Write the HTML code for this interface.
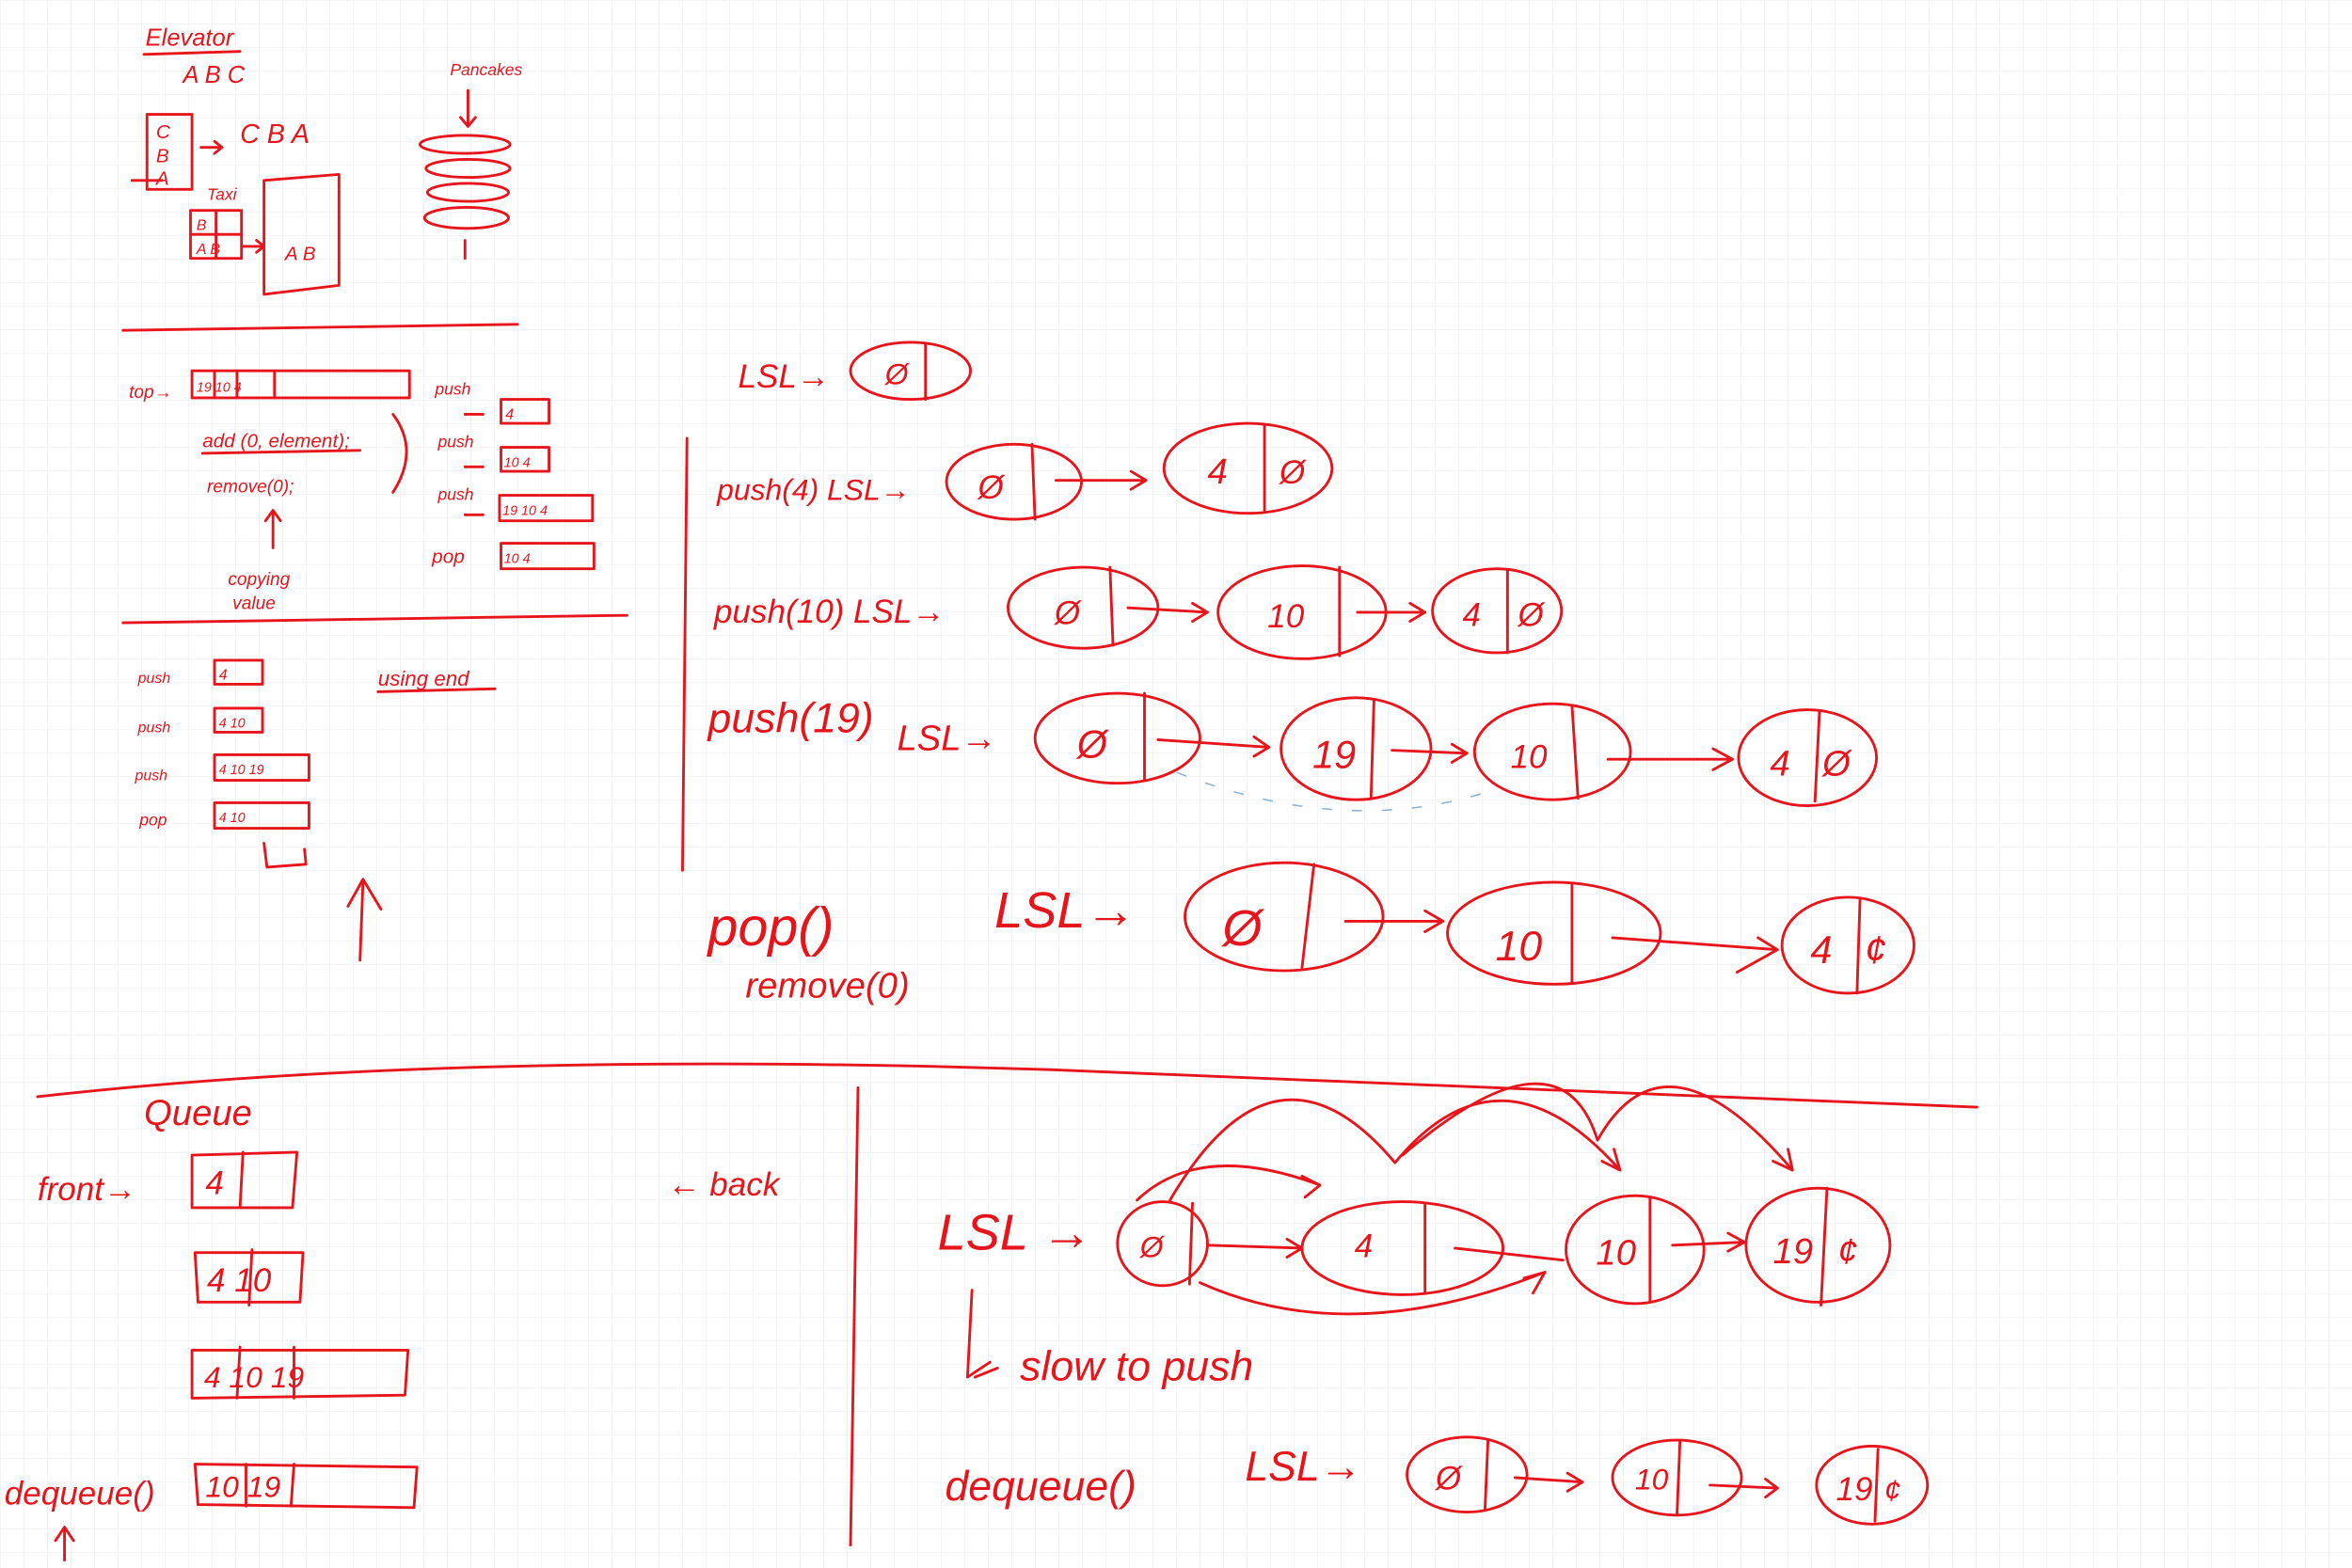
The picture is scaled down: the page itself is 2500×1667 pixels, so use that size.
<!DOCTYPE html>
<html><head><meta charset="utf-8"><style>
html,body{margin:0;padding:0;width:2500px;height:1667px;overflow:hidden;background:#fff;}
body{background-image:linear-gradient(#f4f4f4 1px,transparent 1px),linear-gradient(90deg,#f4f4f4 1px,transparent 1px);background-size:25px 25px;}
svg{position:absolute;left:0;top:0}
text{font-family:"Liberation Sans",sans-serif;fill:#e8141c;font-style:italic}
</style></head><body>
<svg width="2500" height="1667" viewBox="0 0 1568 1045" fill="none" stroke="#e8141c" stroke-width="1.8" stroke-linecap="round" stroke-linejoin="round">
<text x="97" y="30" font-size="16" stroke="none">Elevator</text>
<path d="M96 36 L160 34"/>
<text x="122" y="55" font-size="16" stroke="none">A   B   C</text>
<rect x="98" y="76" width="30" height="50"/>
<text x="104" y="92" font-size="13" stroke="none">C</text>
<text x="104" y="108" font-size="13" stroke="none">B</text>
<text x="104" y="123" font-size="13" stroke="none">A</text>
<path d="M88 120 L108 120 M134 98 L148 98 M143 94 L148 98 L143 102"/>
<text x="160" y="95" font-size="18" stroke="none">C  B  A</text>
<text x="138" y="133" font-size="11" stroke="none">Taxi</text>
<rect x="127" y="140" width="34" height="32"/>
<path d="M127 156 L161 156 M144 140 L144 172 M162 164 L176 164 M171 160 L176 164 L171 168"/>
<text x="131" y="153" font-size="10" stroke="none">B</text>
<text x="131" y="169" font-size="10" stroke="none">A B</text>
<path d="M176 120 L226 116 L226 190 L176 196 Z"/>
<text x="190" y="173" font-size="13" stroke="none">A B</text>
<text x="300" y="50" font-size="11" stroke="none">Pancakes</text>
<path d="M312 60 L312 84 M307 78 L312 84 L317 78"/>
<ellipse cx="310" cy="96" rx="30" ry="6"/><ellipse cx="312" cy="112" rx="28" ry="6"/>
<ellipse cx="312" cy="128" rx="27" ry="6"/><ellipse cx="311" cy="145" rx="28" ry="7"/>
<path d="M310 172 L310 160"/>
<path d="M82 220 L345 216"/>
<text x="86" y="265" font-size="12" stroke="none">top→</text>
<rect x="128" y="247" width="145" height="18"/>
<path d="M143 247 L143 265 M158 247 L158 265 M183 247 L183 265"/>
<text x="131" y="261" font-size="9" stroke="none">19 10  4</text>
<text x="135" y="298" font-size="13" stroke="none">add (0, element);</text>
<path d="M135 302 L240 300"/>
<text x="138" y="328" font-size="12" stroke="none">remove(0);</text>
<path d="M262 276 Q280 300 262 328"/>
<path d="M182 365 L182 340 M177 347 L182 340 L187 347"/>
<text x="152" y="390" font-size="12" stroke="none">copying</text>
<text x="155" y="406" font-size="12" stroke="none">value</text>
<text x="290" y="263" font-size="11" stroke="none">push</text>
<text x="292" y="298" font-size="11" stroke="none">push</text>
<text x="292" y="333" font-size="11" stroke="none">push</text>
<text x="288" y="375" font-size="13" stroke="none">pop</text>
<path d="M310 276 L322 276 M310 311 L322 311 M310 343 L322 343"/>
<rect x="334" y="266" width="32" height="16"/><text x="337" y="279" font-size="10" stroke="none">4</text>
<rect x="334" y="298" width="32" height="16"/><text x="336" y="311" font-size="9" stroke="none">10 4</text>
<rect x="333" y="330" width="62" height="17"/><text x="335" y="343" font-size="9" stroke="none">19 10  4</text>
<rect x="334" y="362" width="62" height="17"/><text x="336" y="375" font-size="9" stroke="none">10  4</text>
<path d="M82 415 L418 410"/>
<text x="92" y="455" font-size="10" stroke="none">push</text>
<text x="92" y="488" font-size="10" stroke="none">push</text>
<text x="90" y="520" font-size="10" stroke="none">push</text>
<text x="93" y="550" font-size="11" stroke="none">pop</text>
<rect x="143" y="440" width="32" height="16"/><text x="146" y="453" font-size="10" stroke="none">4</text>
<rect x="143" y="472" width="32" height="16"/><text x="146" y="485" font-size="9" stroke="none">4 10</text>
<rect x="143" y="503" width="63" height="17"/><text x="146" y="516" font-size="9" stroke="none">4 10 19</text>
<rect x="143" y="535" width="63" height="17"/><text x="146" y="548" font-size="9" stroke="none">4 10</text>
<path d="M176 562 L178 578 L204 576 L203 566"/>
<text x="252" y="457" font-size="14" stroke="none">using end</text>
<path d="M252 461 L330 459"/>
<path d="M240 640 L242 588 M232 604 L242 586 L254 606"/>
<path d="M458 292 L455 580"/>
<text x="492" y="258" font-size="22" stroke="none">LSL→</text>
<ellipse cx="607" cy="247" rx="40" ry="19"/><path d="M617 229 L617 266"/><text x="590" y="256" font-size="20" stroke="none">Ø</text>
<text x="478" y="333" font-size="20" stroke="none">push(4)  LSL→</text>
<ellipse cx="676" cy="321" rx="45" ry="25"/><path d="M688 296 L690 346 M704 320 L764 320 M754 314 L764 320 L754 326"/><text x="652" y="332" font-size="22" stroke="none">Ø</text>
<ellipse cx="832" cy="312" rx="56" ry="30"/><path d="M843 283 L843 340"/><text x="805" y="322" font-size="24" stroke="none">4</text><text x="853" y="322" font-size="22" stroke="none">Ø</text>
<text x="476" y="415" font-size="22" stroke="none">push(10)  LSL→</text>
<ellipse cx="722" cy="405" rx="50" ry="27"/><path d="M740 378 L742 430 M752 405 L805 408 M795 402 L805 408 L795 414"/><text x="703" y="416" font-size="22" stroke="none">Ø</text>
<ellipse cx="868" cy="408" rx="56" ry="31"/><path d="M893 378 L893 437 M905 408 L950 408 M940 402 L950 408 L940 414"/><text x="845" y="418" font-size="22" stroke="none">10</text>
<ellipse cx="998" cy="407" rx="43" ry="28"/><path d="M1005 380 L1005 435"/><text x="975" y="417" font-size="22" stroke="none">4</text><text x="1012" y="417" font-size="22" stroke="none">Ø</text>
<text x="472" y="488" font-size="28" stroke="none">push(19)</text>
<text x="598" y="500" font-size="24" stroke="none">LSL→</text>
<ellipse cx="745" cy="492" rx="55" ry="30"/><path d="M763 462 L763 520 M772 493 L846 498 M836 491 L846 498 L836 504"/><text x="718" y="505" font-size="26" stroke="none">Ø</text>
<ellipse cx="904" cy="499" rx="50" ry="34"/><path d="M916 466 L914 532 M928 500 L978 502 M968 496 L978 502 L968 508"/><text x="875" y="512" font-size="26" stroke="none">19</text>
<ellipse cx="1035" cy="501" rx="52" ry="32"/><path d="M1048 470 L1052 532 M1072 506 L1155 506 M1142 499 L1155 506 L1142 513"/><text x="1007" y="512" font-size="22" stroke="none">10</text>
<ellipse cx="1205" cy="505" rx="46" ry="32"/><path d="M1213 474 L1210 534"/><text x="1180" y="517" font-size="24" stroke="none">4</text><text x="1215" y="517" font-size="24" stroke="none">Ø</text>
<path d="M785 515 Q900 560 1000 525" stroke="#8fb3d6" stroke-width="1" stroke-dasharray="6 14"/>
<text x="472" y="630" font-size="36" stroke="none">pop()</text>
<text x="497" y="665" font-size="24" stroke="none">remove(0)</text>
<text x="663" y="618" font-size="34" stroke="none">LSL→</text>
<ellipse cx="856" cy="611" rx="66" ry="36"/><path d="M876 576 L868 645 M897 614 L962 614 M950 607 L962 614 L950 621"/><text x="815" y="630" font-size="34" stroke="none">Ø</text>
<ellipse cx="1036" cy="622" rx="71" ry="34"/><path d="M1048 590 L1048 655 M1075 625 L1185 633 M1172 625 L1185 633 L1158 648"/><text x="997" y="640" font-size="28" stroke="none">10</text>
<ellipse cx="1232" cy="630" rx="44" ry="32"/><path d="M1240 600 L1238 662"/><text x="1207" y="642" font-size="26" stroke="none">4</text><text x="1243" y="642" font-size="26" stroke="none">¢</text>
<path d="M25 731 Q300 700 700 713 Q1000 726 1318 738"/>
<path d="M572 725 L567 1030"/>
<text x="96" y="750" font-size="24" stroke="none">Queue</text>
<text x="25" y="800" font-size="22" stroke="none">front→</text>
<path d="M128 770 L198 768 L195 805 L128 805 Z M162 768 L160 805"/><text x="137" y="796" font-size="22" stroke="none">4</text>
<path d="M130 835 L202 835 L200 868 L132 868 Z M168 833 L166 870"/><text x="138" y="861" font-size="22" stroke="none">4  10</text>
<path d="M128 900 L272 900 L270 930 L128 932 Z M160 898 L158 932 M196 898 L196 932"/><text x="136" y="925" font-size="20" stroke="none">4   10  19</text>
<path d="M130 976 L278 978 L276 1005 L132 1003 Z M164 976 L164 1004 M196 976 L194 1004"/><text x="137" y="998" font-size="20" stroke="none">10  19</text>
<text x="3" y="1003" font-size="22" stroke="none">dequeue()</text>
<path d="M43 1040 L43 1020 M37 1027 L43 1018 L49 1027"/>
<text x="445" y="797" font-size="22" stroke="none">← back</text>
<text x="625" y="833" font-size="34" stroke="none">LSL →</text>
<ellipse cx="775" cy="829" rx="30" ry="28"/><path d="M795 802 L793 856 M805 830 L868 832 M858 826 L868 832 L858 838"/><text x="760" y="838" font-size="20" stroke="none">Ø</text>
<ellipse cx="935" cy="832" rx="67" ry="31"/><path d="M950 803 L950 862 M970 832 L1042 840"/><text x="903" y="838" font-size="22" stroke="none">4</text>
<ellipse cx="1090" cy="833" rx="46" ry="36"/><path d="M1100 798 L1100 868 M1115 830 L1163 828 M1152 822 L1163 828 L1152 834"/><text x="1064" y="843" font-size="24" stroke="none">10</text>
<ellipse cx="1212" cy="830" rx="48" ry="38"/><path d="M1218 792 L1214 870"/><text x="1182" y="842" font-size="24" stroke="none">19</text><text x="1225" y="842" font-size="24" stroke="none">¢</text>
<path d="M800 855 Q900 900 1030 848 M1016 852 L1030 848 L1022 862 M758 800 Q800 760 880 790 M868 784 L880 790 L870 798 M780 800 Q850 680 930 775 Q1000 690 1080 780 M1068 774 L1080 780 L1076 766 M935 770 Q1040 680 1065 760 Q1110 680 1195 780 M1182 774 L1195 780 L1192 766"/>
<path d="M648 860 L645 918 L660 908 M650 918 L665 912"/>
<text x="680" y="920" font-size="28" stroke="none">slow  to  push</text>
<text x="630" y="1000" font-size="28" stroke="none">dequeue()</text>
<text x="830" y="987" font-size="28" stroke="none">LSL→</text>
<ellipse cx="978" cy="983" rx="40" ry="25"/><path d="M992 960 L990 1006 M1010 985 L1055 988 M1045 982 L1055 988 L1045 994"/><text x="957" y="993" font-size="22" stroke="none">Ø</text>
<ellipse cx="1118" cy="985" rx="43" ry="25"/><path d="M1120 960 L1118 1010 M1140 990 L1185 992 M1177 986 L1185 992 L1177 998"/><text x="1090" y="993" font-size="20" stroke="none">10</text>
<ellipse cx="1248" cy="990" rx="37" ry="26"/><path d="M1252 966 L1250 1014"/><text x="1224" y="1000" font-size="22" stroke="none">19</text><text x="1256" y="1000" font-size="20" stroke="none">¢</text>
</svg>
</body></html>
